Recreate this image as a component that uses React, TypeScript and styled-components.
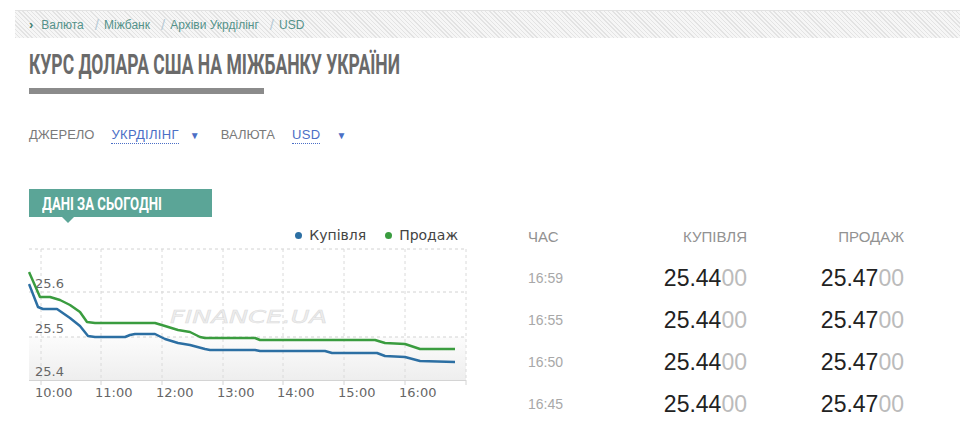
import React from 'react';
import styled, { createGlobalStyle } from 'styled-components';

const GlobalStyle = createGlobalStyle`
  body {
    margin: 0;
    background: #fff;
    font-family: 'Liberation Sans', Arial, sans-serif;
  }
`;

const Page = styled.div`
  width: 960px;
  height: 443px;
  overflow: hidden;
`;

const Breadcrumbs = styled.nav`
  margin: 10px 0 0 15px;
  height: 27px;
  border-top: 1px solid #e2e2e2;
  background-color: #f6f6f6;
  background-image: repeating-linear-gradient(45deg, #e3e3e3 0 1px, transparent 1px 3px);
  display: flex;
  align-items: center;
  padding-left: 14px;
  font-size: 12px;
  color: #54928a;
`;

const Chevron = styled.span`
  font-size: 13px;
  font-weight: bold;
  margin-right: 8px;
  color: #3f7f70;
`;

const Sep = styled.span`
  color: #b7cad6;
  font-size: 15px;
  margin: 0 5px 0 11px;
`;

const Content = styled.div`
  padding-left: 29px;
`;

const Condensed = styled.span<{ $scale: number }>`
  display: inline-block;
  font-family: Roboto, 'DejaVu Sans', sans-serif;
  font-weight: 700;
  white-space: nowrap;
  transform: scaleX(${({ $scale }) => $scale});
  transform-origin: left center;
`;

const Title = styled.h1`
  margin: 12px 0 0;
  height: 30px;
  line-height: 30px;
  font-size: 28px;
  color: #6a6a6a;
  font-weight: 700;
`;

const TitleBar = styled.div`
  margin-top: 8px;
  width: 235px;
  height: 6px;
  background: #8b8b8b;
`;

const Filters = styled.div`
  margin-top: 33px;
  display: flex;
  align-items: baseline;
  height: 16px;
  line-height: 16px;
  font-size: 13px;
`;

const FilterLabel = styled.span`
  color: #7a7a7a;
  margin-right: 17px;
`;

const FilterValue = styled.span`
  color: #4b6fc6;
  letter-spacing: 0.3px;
  border-bottom: 1px dotted #4b6fc6;
`;

const Arrow = styled.span<{ $gap: number }>`
  color: #4b6fc6;
  font-size: 10px;
  margin-left: ${({ $gap }) => $gap}px;
  margin-right: 21px;
`;

const Section = styled.div`
  margin-top: 46px;
  display: flex;
`;

const LeftCol = styled.div`
  width: 440px;
`;

const Tab = styled.div`
  position: relative;
  width: 183px;
  height: 28px;
  background: #5ba597;
  color: #fff;
  font-size: 18px;
  line-height: 29px;
  padding-left: 13px;
  box-sizing: border-box;

  &::after {
    content: '';
    position: absolute;
    left: 33px;
    bottom: -6px;
    border-left: 6px solid transparent;
    border-right: 6px solid transparent;
    border-top: 6px solid #5ba597;
  }
`;

const Legend = styled.div`
  margin-top: 10px;
  height: 16px;
  display: flex;
  justify-content: flex-end;
  align-items: center;
  gap: 19px;
  padding-right: 11px;
  font-family: 'DejaVu Sans', sans-serif;
  font-size: 14px;
  color: #444;
`;

const LegendItem = styled.span`
  display: flex;
  align-items: center;
  gap: 7px;
`;

const Dot = styled.i<{ $color: string }>`
  width: 7px;
  height: 7px;
  border-radius: 50%;
  background: ${({ $color }) => $color};
`;

const ChartSvg = styled.svg`
  display: block;
  margin-left: -1px;
`;

const RightCol = styled.div`
  margin-left: 59px;
  padding-top: 28px;
`;

const Table = styled.div`
  display: grid;
  grid-template-columns: 60px 159px 157px;
`;

const HeadCell = styled.div<{ $right?: boolean }>`
  height: 40px;
  line-height: 40px;
  font-size: 15px;
  color: #929292;
  text-align: ${({ $right }) => ($right ? 'right' : 'left')};
`;

const TimeCell = styled.div`
  height: 42px;
  line-height: 42px;
  font-size: 14px;
  color: #a8a8a8;
`;

const RateCell = styled.div`
  height: 42px;
  line-height: 42px;
  font-size: 23px;
  color: #222;
  text-align: right;
`;

const Faded = styled.span`
  color: #bbb;
`;

const buyPts = [
  [29, 284], [38, 307], [43, 309], [57, 309], [70, 318], [80, 326], [88, 336], [95, 337],
  [125, 337], [130, 335], [135, 334], [155, 334], [165, 339], [178, 343], [190, 345],
  [205, 349], [210, 350], [255, 350], [260, 351], [325, 351], [332, 353], [377, 353],
  [385, 356], [405, 357], [420, 361], [455, 362],
];

const sellPts = [
  [29, 272], [40, 297], [50, 297], [60, 300], [70, 305], [80, 312], [87, 322], [95, 323],
  [155, 323], [165, 326], [178, 330], [190, 332], [200, 337], [205, 338], [255, 338],
  [260, 340], [375, 340], [385, 343], [405, 344], [420, 349], [455, 349],
];

const hours = ['10:00', '11:00', '12:00', '13:00', '14:00', '15:00', '16:00'];
const vLines = [41, 101, 162, 223, 283, 344, 405, 466];

const rows = ['16:59', '16:55', '16:50', '16:45'];

const toPoints = (pts: number[][]) => pts.map(([x, y]) => `${x},${y}`).join(' ');

const Chart: React.FC = () => (
  <ChartSvg width={441} height={165} viewBox="28 243 441 165">
    <defs>
      <linearGradient id="band" x1="0" y1="0" x2="0" y2="1">
        <stop offset="0" stopColor="#fcfcfc" />
        <stop offset="1" stopColor="#eeeeee" />
      </linearGradient>
    </defs>
    <rect x={29} y={337} width={437} height={43} fill="url(#band)" />
    {[249, 292, 337].map((y) => (
      <line key={y} x1={29} x2={466} y1={y} y2={y} stroke="#d2d2d2" strokeDasharray="3 3" />
    ))}
    {vLines.map((x) => (
      <line key={x} x1={x} x2={x} y1={249} y2={380} stroke="#dadada" strokeDasharray="3 3" />
    ))}
    <line x1={29} x2={466} y1={380.5} y2={380.5} stroke="#d4d4d4" />
    {vLines.map((x) => (
      <line key={`t${x}`} x1={x} x2={x} y1={380} y2={385} stroke="#d4d4d4" />
    ))}
    <text
      x={170}
      y={323}
      textLength={157}
      lengthAdjust="spacingAndGlyphs"
      fontFamily="'DejaVu Sans', sans-serif"
      fontStyle="italic"
      fontSize={18}
      fill="#eeeeee"
      stroke="#dcdcdc"
      strokeWidth={0.5}
    >
      FINANCE.UA
    </text>
    <g fontFamily="'DejaVu Sans', sans-serif" fontSize={13} fill="#666">
      <text x={35} y={288}>25.6</text>
      <text x={35} y={333}>25.5</text>
      <text x={35} y={376}>25.4</text>
      {hours.map((h, i) => (
        <text key={h} x={vLines[i] - 6} y={397}>{h}</text>
      ))}
    </g>
    <polyline points={toPoints(sellPts)} fill="none" stroke="#3a9c3f" strokeWidth={2.5} strokeLinejoin="round" />
    <polyline points={toPoints(buyPts)} fill="none" stroke="#2c6fa3" strokeWidth={2.5} strokeLinejoin="round" />
  </ChartSvg>
);

const App: React.FC = () => (
  <Page>
    <GlobalStyle />
    <Breadcrumbs>
      <Chevron>›</Chevron>
      Валюта
      <Sep>/</Sep>
      Міжбанк
      <Sep>/</Sep>
      Архіви Укрділінг
      <Sep>/</Sep>
      USD
    </Breadcrumbs>
    <Content>
      <Title>
        <Condensed $scale={0.625}>КУРС ДОЛАРА США НА МІЖБАНКУ УКРАЇНИ</Condensed>
      </Title>
      <TitleBar />
      <Filters>
        <FilterLabel>ДЖЕРЕЛО</FilterLabel>
        <FilterValue>УКРДІЛІНГ</FilterValue>
        <Arrow $gap={11}>▼</Arrow>
        <FilterLabel>ВАЛЮТА</FilterLabel>
        <FilterValue>USD</FilterValue>
        <Arrow $gap={16}>▼</Arrow>
      </Filters>
      <Section>
        <LeftCol>
          <Tab>
            <Condensed $scale={0.73}>ДАНІ ЗА СЬОГОДНІ</Condensed>
          </Tab>
          <Legend>
            <LegendItem>
              <Dot $color="#2c6fa3" />
              Купівля
            </LegendItem>
            <LegendItem>
              <Dot $color="#3a9c3f" />
              Продаж
            </LegendItem>
          </Legend>
          <Chart />
        </LeftCol>
        <RightCol>
          <Table>
            <HeadCell>ЧАС</HeadCell>
            <HeadCell $right>КУПІВЛЯ</HeadCell>
            <HeadCell $right>ПРОДАЖ</HeadCell>
            {rows.map((t) => (
              <React.Fragment key={t}>
                <TimeCell>{t}</TimeCell>
                <RateCell>
                  25.44<Faded>00</Faded>
                </RateCell>
                <RateCell>
                  25.47<Faded>00</Faded>
                </RateCell>
              </React.Fragment>
            ))}
          </Table>
        </RightCol>
      </Section>
    </Content>
  </Page>
);

export default App;
